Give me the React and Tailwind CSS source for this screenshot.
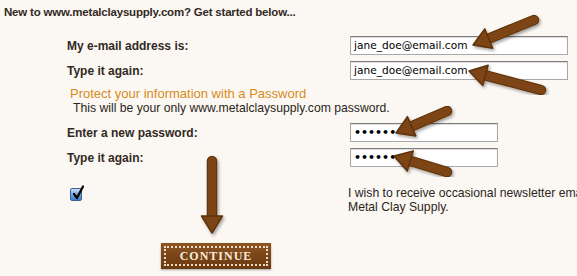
import React from 'react'

const ARROWS = [
  { from: [534, 20], to: [473, 45] },
  { from: [541, 90], to: [469, 71] },
  { from: [447, 111], to: [396, 133] },
  { from: [447, 172], to: [394, 156] },
  { from: [212, 161], to: [212, 233] },
]

function Arrow({ from, to }) {
  const [x1, y1] = from
  const [x2, y2] = to
  const len = Math.hypot(x2 - x1, y2 - y1)
  const ux = (x2 - x1) / len
  const uy = (y2 - y1) / len
  const hl = 17
  const hw = 10.5
  const bx = x2 - ux * hl
  const by = y2 - uy * hl
  const head = `${x2},${y2} ${bx - uy * hw},${by + ux * hw} ${bx + uy * hw},${by - ux * hw}`
  return (
    <g filter="url(#arrowShadow)">
      <line x1={x1} y1={y1} x2={bx + ux * 2} y2={by + uy * 2} stroke="#5e3209" strokeWidth="10.5" strokeLinecap="round" />
      <line x1={x1} y1={y1} x2={bx + ux * 2} y2={by + uy * 2} stroke="#7d4512" strokeWidth="8.5" strokeLinecap="round" />
      <polygon points={head} fill="#7d4512" stroke="#5e3209" strokeWidth="1.5" strokeLinejoin="round" />
    </g>
  )
}

function Field({ label, value, wide }) {
  return (
    <div className="flex items-center h-[19px]">
      <div className="ml-[67px] w-[283px] shrink-0 text-[12px] font-bold text-[#33291f]">{label}</div>
      <div
        className={`h-[19px] shrink-0 ${wide ? 'w-[218px]' : 'w-[148px]'} bg-white border border-[#a8a8a8] border-t-[#7c7c7c] shadow-[inset_0_1px_1px_rgba(0,0,0,0.15)] flex items-center pl-[3px] text-[10.6px] text-black`}
        style={{ fontFamily: '"DejaVu Sans", Verdana, sans-serif' }}
      >
        {value}
      </div>
    </div>
  )
}

function Dots() {
  return <span className="text-[11px] font-bold leading-none">••••••</span>
}

export default function App() {
  return (
    <div
      className="relative w-[577px] h-[276px] overflow-hidden bg-[#fbf8f4] text-[#33291f]"
      style={{ fontFamily: '"Liberation Sans", Arial, Helvetica, sans-serif' }}
    >
      <div className="pt-[4px] pl-[4px] text-[11.5px] tracking-[-0.2px] leading-[16px] font-bold whitespace-nowrap">
        New to www.metalclaysupply.com? Get started below...
      </div>

      <div className="mt-[16px] flex flex-col">
        <Field label="My e-mail address is:" value="jane_doe@email.com" wide />
        <div className="mt-[6px]">
          <Field label="Type it again:" value="jane_doe@email.com" wide />
        </div>

        <div className="mt-[6px] ml-[70px] text-[13px] leading-[15px] text-[#d88a1a] whitespace-nowrap">
          Protect your information with a Password
        </div>
        <div className="ml-[73px] text-[12.2px] leading-[14px] text-[#2b2520] whitespace-nowrap">
          This will be your only www.metalclaysupply.com password.
        </div>

        <div className="mt-[8px]">
          <Field label="Enter a new password:" value={<Dots />} />
        </div>
        <div className="mt-[6px]">
          <Field label="Type it again:" value={<Dots />} />
        </div>

        <div className="mt-[19px] flex items-start">
          <div className="ml-[70px] mt-[2px] shrink-0 relative w-[12px] h-[13px] rounded-[2px] border border-[#3d5f9a] bg-linear-to-b from-[#c6ddf7] via-[#76a6e2] to-[#3f7fd2]">
            <svg className="absolute left-[1px] -top-[4px]" width="13" height="15" viewBox="0 0 13 15">
              <path d="M2 9 L5 13 L11 1.5" fill="none" stroke="#000" strokeWidth="2.2" strokeLinecap="round" strokeLinejoin="round" />
            </svg>
          </div>
          <div className="ml-[266px] shrink-0 text-[12.2px] leading-[14px] text-[#2b2520] whitespace-nowrap">
            I wish to receive occasional newsletter emails from
            <br />
            Metal Clay Supply.
          </div>
        </div>

        <div className="mt-[29px] ml-[161px] w-[110px] h-[26px] p-[3px] bg-linear-to-b from-[#8e5624] via-[#7a4417] to-[#6a3810] shadow-[0_1px_2px_rgba(0,0,0,0.35)]">
          <div className="w-full h-full border-2 border-dotted border-[#efdcc0] flex items-center justify-center">
            <span
              className="text-[12px] font-bold tracking-[1px] text-[#f6ecdc] leading-none"
              style={{ fontFamily: '"Liberation Serif", "Times New Roman", serif' }}
            >
              CONTINUE
            </span>
          </div>
        </div>
      </div>

      <svg className="absolute inset-0 pointer-events-none" width="577" height="276">
        <defs>
          <filter id="arrowShadow" x="-20%" y="-20%" width="140%" height="140%">
            <feDropShadow dx="1.5" dy="2" stdDeviation="1.5" floodColor="#000" floodOpacity="0.35" />
          </filter>
        </defs>
        {ARROWS.map((a, i) => (
          <Arrow key={i} from={a.from} to={a.to} />
        ))}
      </svg>
    </div>
  )
}
